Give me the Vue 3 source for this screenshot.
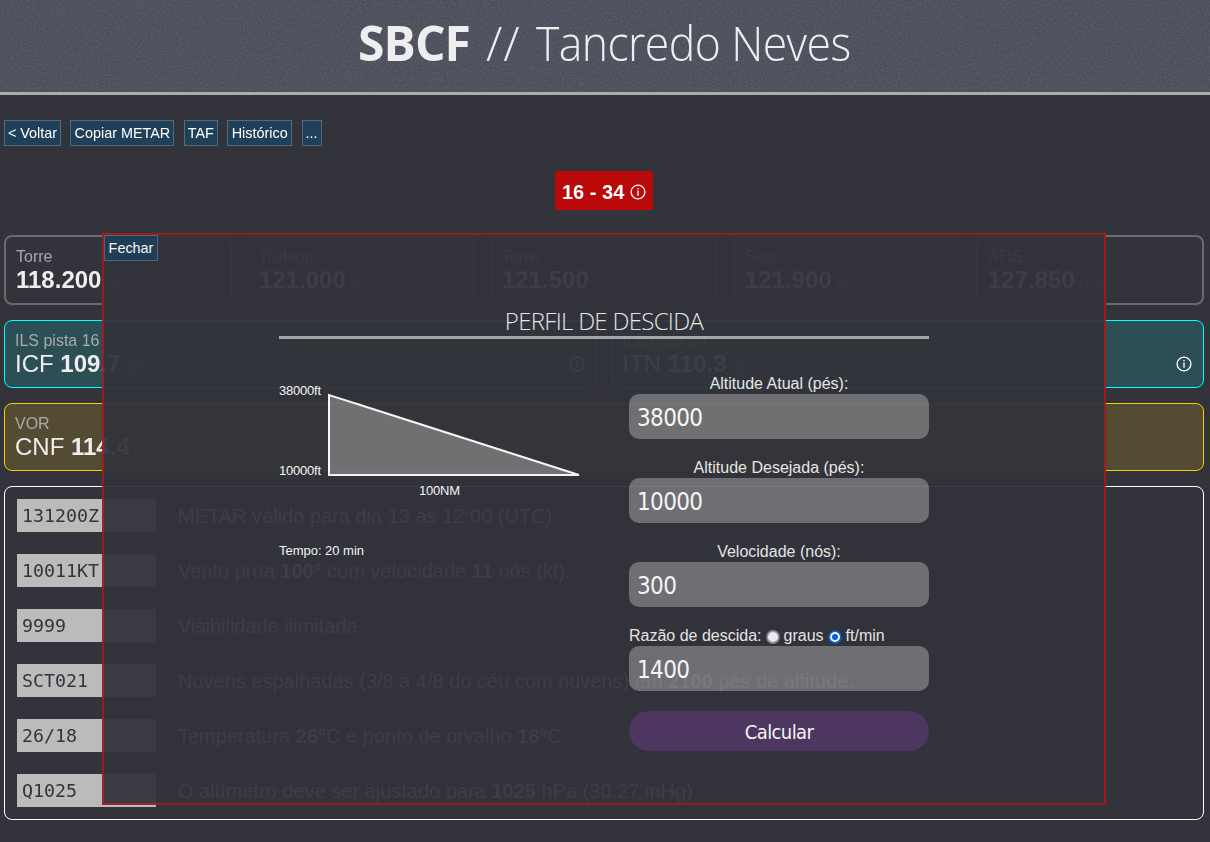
<script setup>
import { ref } from 'vue'

const actions = [
  { label: '< Voltar', size: 'w57' },
  { label: 'Copiar METAR', size: 'w104' },
  { label: 'TAF', size: 'w34' },
  { label: 'Histórico', size: 'w65' },
  { label: '...', size: 'w20' },
]
const freqs = [
  { name: 'Torre', value: '118.200' },
  { name: 'Tráfego', value: '121.000' },
  { name: 'Torre', value: '121.500' },
  { name: 'Solo', value: '121.900' },
  { name: 'ATIS', value: '127.850' },
]
const ils = [
  { name: 'ILS pista 16', id: 'ICF', value: '109.7' },
  { name: 'ILS pista 34', id: 'ITN', value: '110.3' },
]
const metar = [
  { code: '131200Z', parts: ['METAR válido para dia 13 as 12:00 (UTC)'] },
  { code: '10011KT', parts: ['Vento proa ', '100°', ' com velocidade ', '11', ' nós (kt).'] },
  { code: '9999', parts: ['Visibilidade ilimitada'] },
  { code: 'SCT021', parts: ['Nuvens espalhadas (3/8 a 4/8 do céu com nuvens) em ', '2100', ' pés de altitude.'] },
  { code: '26/18', parts: ['Temperatura ', '26°', 'C e ponto de orvalho ', '18°', 'C.'] },
  { code: 'Q1025', parts: ['O altímetro deve ser ajustado para ', '1025', ' hPa (30.27 inHg)'] },
]
const fields = ref([
  { label: 'Altitude Atual (pés):', value: '38000' },
  { label: 'Altitude Desejada (pés):', value: '10000' },
  { label: 'Velocidade (nós):', value: '300' },
])
const rate = ref('1400')
</script>

<template>
  <div class="page">
    <header class="top">
      <svg class="grain" width="1210" height="92" aria-hidden="true">
        <filter id="grain" x="0" y="0" width="100%" height="100%" color-interpolation-filters="sRGB">
          <feTurbulence type="fractalNoise" baseFrequency="0.55" numOctaves="3" seed="4" />
          <feColorMatrix type="matrix" values="0.6 0.6 0 0 -0.1  0.6 0.6 0 0 -0.1  0.6 0.6 0 0 -0.1  0 0 0 0 1" />
        </filter>
        <rect width="1210" height="92" filter="url(#grain)" />
      </svg>
      <h1><b>SBCF</b> <span class="sep">//</span> <span class="city">Tancredo Neves</span></h1>
    </header>

    <nav class="actions">
      <button v-for="a in actions" :key="a.label" class="btn" :class="a.size">{{ a.label }}</button>
    </nav>

    <div class="runway">
      <span class="badge">16 - 34
        <svg class="info" viewBox="0 0 16 16"><circle cx="8" cy="8" r="6.9" /><path d="M8 6.6v5.2M8 4v1.3" /></svg>
      </span>
    </div>

    <main>
      <section class="row">
        <article v-for="(f, i) in freqs" :key="i" class="card">
          <div class="name">{{ f.name }}</div>
          <div class="val"><b>{{ f.value }}</b> <small>MHz</small></div>
        </article>
      </section>
      <section class="row">
        <article v-for="f in ils" :key="f.id" class="card ils">
          <div class="name">{{ f.name }}</div>
          <div class="val">{{ f.id }} <b>{{ f.value }}</b> <small>MHz</small>
            <svg class="info" viewBox="0 0 16 16"><circle cx="8" cy="8" r="6.9" /><path d="M8 6.6v5.2M8 4v1.3" /></svg>
          </div>
        </article>
      </section>
      <section class="row">
        <article class="card vor">
          <div class="name">VOR</div>
          <div class="val">CNF <b>114.4</b> <small>MHz</small></div>
        </article>
      </section>
      <section class="metar">
        <div v-for="m in metar" :key="m.code" class="line">
          <code>{{ m.code }}</code>
          <p><template v-for="(p, i) in m.parts" :key="i"><b v-if="i % 2">{{ p }}</b><span v-else>{{ p }}</span></template></p>
        </div>
      </section>
    </main>

    <div class="modal">
      <button class="btn close">Fechar</button>
      <div class="content">
        <h2>PERFIL DE DESCIDA</h2>
        <div class="cols">
          <svg class="chart" width="350" height="200" viewBox="0 0 350 200">
            <path class="slope" d="M50 22V102H300Z" />
            <text x="0" y="22" textLength="42">38000ft</text>
            <text x="0" y="102" textLength="42">10000ft</text>
            <text x="140" y="122" textLength="41">100NM</text>
            <text x="0" y="182" textLength="85">Tempo: 20 min</text>
          </svg>
          <form @submit.prevent>
            <div v-for="f in fields" :key="f.label" class="field">
              <label>{{ f.label }}</label>
              <input v-model="f.value" type="text" />
            </div>
            <div class="field">
              <div class="radios">
                <span>Razão de descida:</span>
                <svg class="radio" viewBox="0 0 14 14"><circle cx="7" cy="7" r="6" fill="#f6f6f6" stroke="#8f8f9d" stroke-width="1.8" /></svg>
                <span>graus</span>
                <svg class="radio" viewBox="0 0 14 14"><circle cx="7" cy="7" r="6.8" fill="#0561dc" /><circle cx="7" cy="7" r="4" fill="none" stroke="#fff" stroke-width="2" /></svg>
                <span>ft/min</span>
              </div>
              <input v-model="rate" type="text" />
            </div>
            <button class="calc" type="submit">Calcular</button>
          </form>
        </div>
      </div>
    </div>
  </div>
</template>

<style>
body {
  background: #33333b;
  overflow: hidden;
}
</style>

<style scoped>
* {
  box-sizing: border-box;
}
.page {
  position: relative;
  height: 842px;
  overflow: hidden;
  background: #33333b;
  color: #eee;
  font: 16px/20px 'Liberation Sans', Arial, sans-serif;
}
.top {
  position: relative;
  height: 95px;
  border-bottom: 3px solid #a9acab;
  background: #50535f;
  overflow: hidden;
}
.grain {
  position: absolute;
  inset: 0;
  opacity: 0.18;
  mix-blend-mode: overlay;
}
h1 {
  position: relative;
  display: flex;
  width: 494px;
  margin: 0 auto;
  font: 300 48px/86px 'Open Sans', sans-serif;
  letter-spacing: -0.6px;
  white-space: nowrap;
}
h1 b {
  flex: none;
  width: 128px;
  font-weight: 700;
  letter-spacing: -0.9px;
}
.sep {
  flex: none;
  width: 50px;
  letter-spacing: 1px;
}
.city {
  flex: none;
  transform: scaleX(0.927);
  transform-origin: left;
}
.actions {
  display: flex;
  gap: 9.4px;
  padding: 25px 4px 0;
}
.btn {
  height: 26px;
  padding: 1px 0 0;
  border: 1px solid #4f6b80;
  background: #1f4058;
  color: #fff;
  font: 14.4px/23px 'Liberation Sans', Arial, sans-serif;
  white-space: nowrap;
}
.w57 { width: 57px; }
.w104 { width: 104px; }
.w34 { width: 34px; }
.w65 { width: 65px; }
.w20 { width: 20px; }
.runway {
  display: flex;
  justify-content: center;
  padding: 25px 2px 0 0;
}
.badge {
  display: flex;
  align-items: center;
  gap: 6px;
  width: 98px;
  height: 39px;
  padding: 3px 0 0 7px;
  border-radius: 3px;
  background: #bb0a0a;
  color: #fff;
  font-weight: 700;
  font-size: 20px;
  white-space: nowrap;
}
.info {
  width: 16px;
  height: 16px;
  flex: none;
  fill: none;
  stroke: #fff;
  stroke-width: 1.35;
}
main {
  display: flex;
  flex-direction: column;
  gap: 15px;
  padding: 25px 6px 0 4px;
}
.row {
  display: flex;
  gap: 15px;
}
.card {
  flex: 1;
  height: 70px;
  padding: 10px 10px 0;
  border: 2px solid #6b6b6b;
  border-radius: 8px;
}
.card.ils,
.card.vor {
  height: 68px;
  border: 1px solid #0ff;
  background: #2c4e55;
}
.card.vor {
  border-color: #f2cf0a;
  background: #534c33;
}
.name {
  height: 19px;
  color: #aaa;
  line-height: 20px;
}
.val {
  position: relative;
  font-size: 24px;
  line-height: 28px;
}
.val small {
  margin-left: -3px;
  color: #777;
  font-size: 12.8px;
}
.val .info {
  position: absolute;
  right: 1px;
  top: 6px;
}
.metar {
  display: flex;
  flex-direction: column;
  gap: 22px;
  height: 334px;
  padding: 12px;
  border: 1px solid #fff;
  border-radius: 8px;
}
.line {
  display: flex;
  gap: 22px;
  height: 33px;
}
code {
  width: 139px;
  height: 33px;
  padding-left: 5px;
  background: #bbb;
  color: #33333b;
  font: 18.3px/33px 'DejaVu Sans Mono', monospace;
}
p {
  margin: 0;
  font-size: 20px;
  line-height: 35px;
  white-space: pre;
}
.modal {
  position: absolute;
  left: 102px;
  top: 233px;
  width: 1004px;
  height: 572px;
  border: 2px solid #a5191d;
  background: #33333b;
  opacity: 0.95;
}
.close {
  display: block;
  width: 54px;
}
.content {
  width: 650px;
  margin: 41px 0 0 175px;
}
h2 {
  height: 37px;
  margin: 0;
  border-bottom: 3px solid #a9acab;
  text-align: center;
  font: 300 24px/37px 'Open Sans', sans-serif;
  letter-spacing: -0.7px;
}
.cols {
  display: flex;
  padding-top: 34px;
}
.chart {
  flex: none;
  overflow: visible;
}
.chart text {
  fill: #fff;
  font: 13px 'Liberation Sans', Arial, sans-serif;
}
.slope {
  fill: #727277;
  stroke: #fff;
  stroke-width: 2;
}
form {
  width: 300px;
}
.field {
  height: 84px;
}
label,
.radios {
  display: block;
  height: 21px;
  line-height: 21px;
  text-align: center;
}
.radios {
  display: flex;
  align-items: center;
  gap: 4px;
}
.radio {
  width: 14px;
  height: 14px;
  margin-top: 3px;
}
input {
  display: block;
  width: 300px;
  height: 45px;
  padding: 2px 8px 0;
  border: 0;
  border-radius: 10px;
  background: #727277;
  color: #fff;
  font: 24px 'DejaVu Sans Condensed', 'DejaVu Sans', sans-serif;
  letter-spacing: -0.65px;
}
.calc {
  display: block;
  width: 300px;
  height: 40px;
  margin-top: 2px;
  padding: 2px 0 0;
  border: 0;
  border-radius: 20px;
  background: #503863;
  color: #fff;
  font: 20px/38px 'DejaVu Sans Condensed', 'DejaVu Sans', sans-serif;
  letter-spacing: -0.6px;
}
</style>
